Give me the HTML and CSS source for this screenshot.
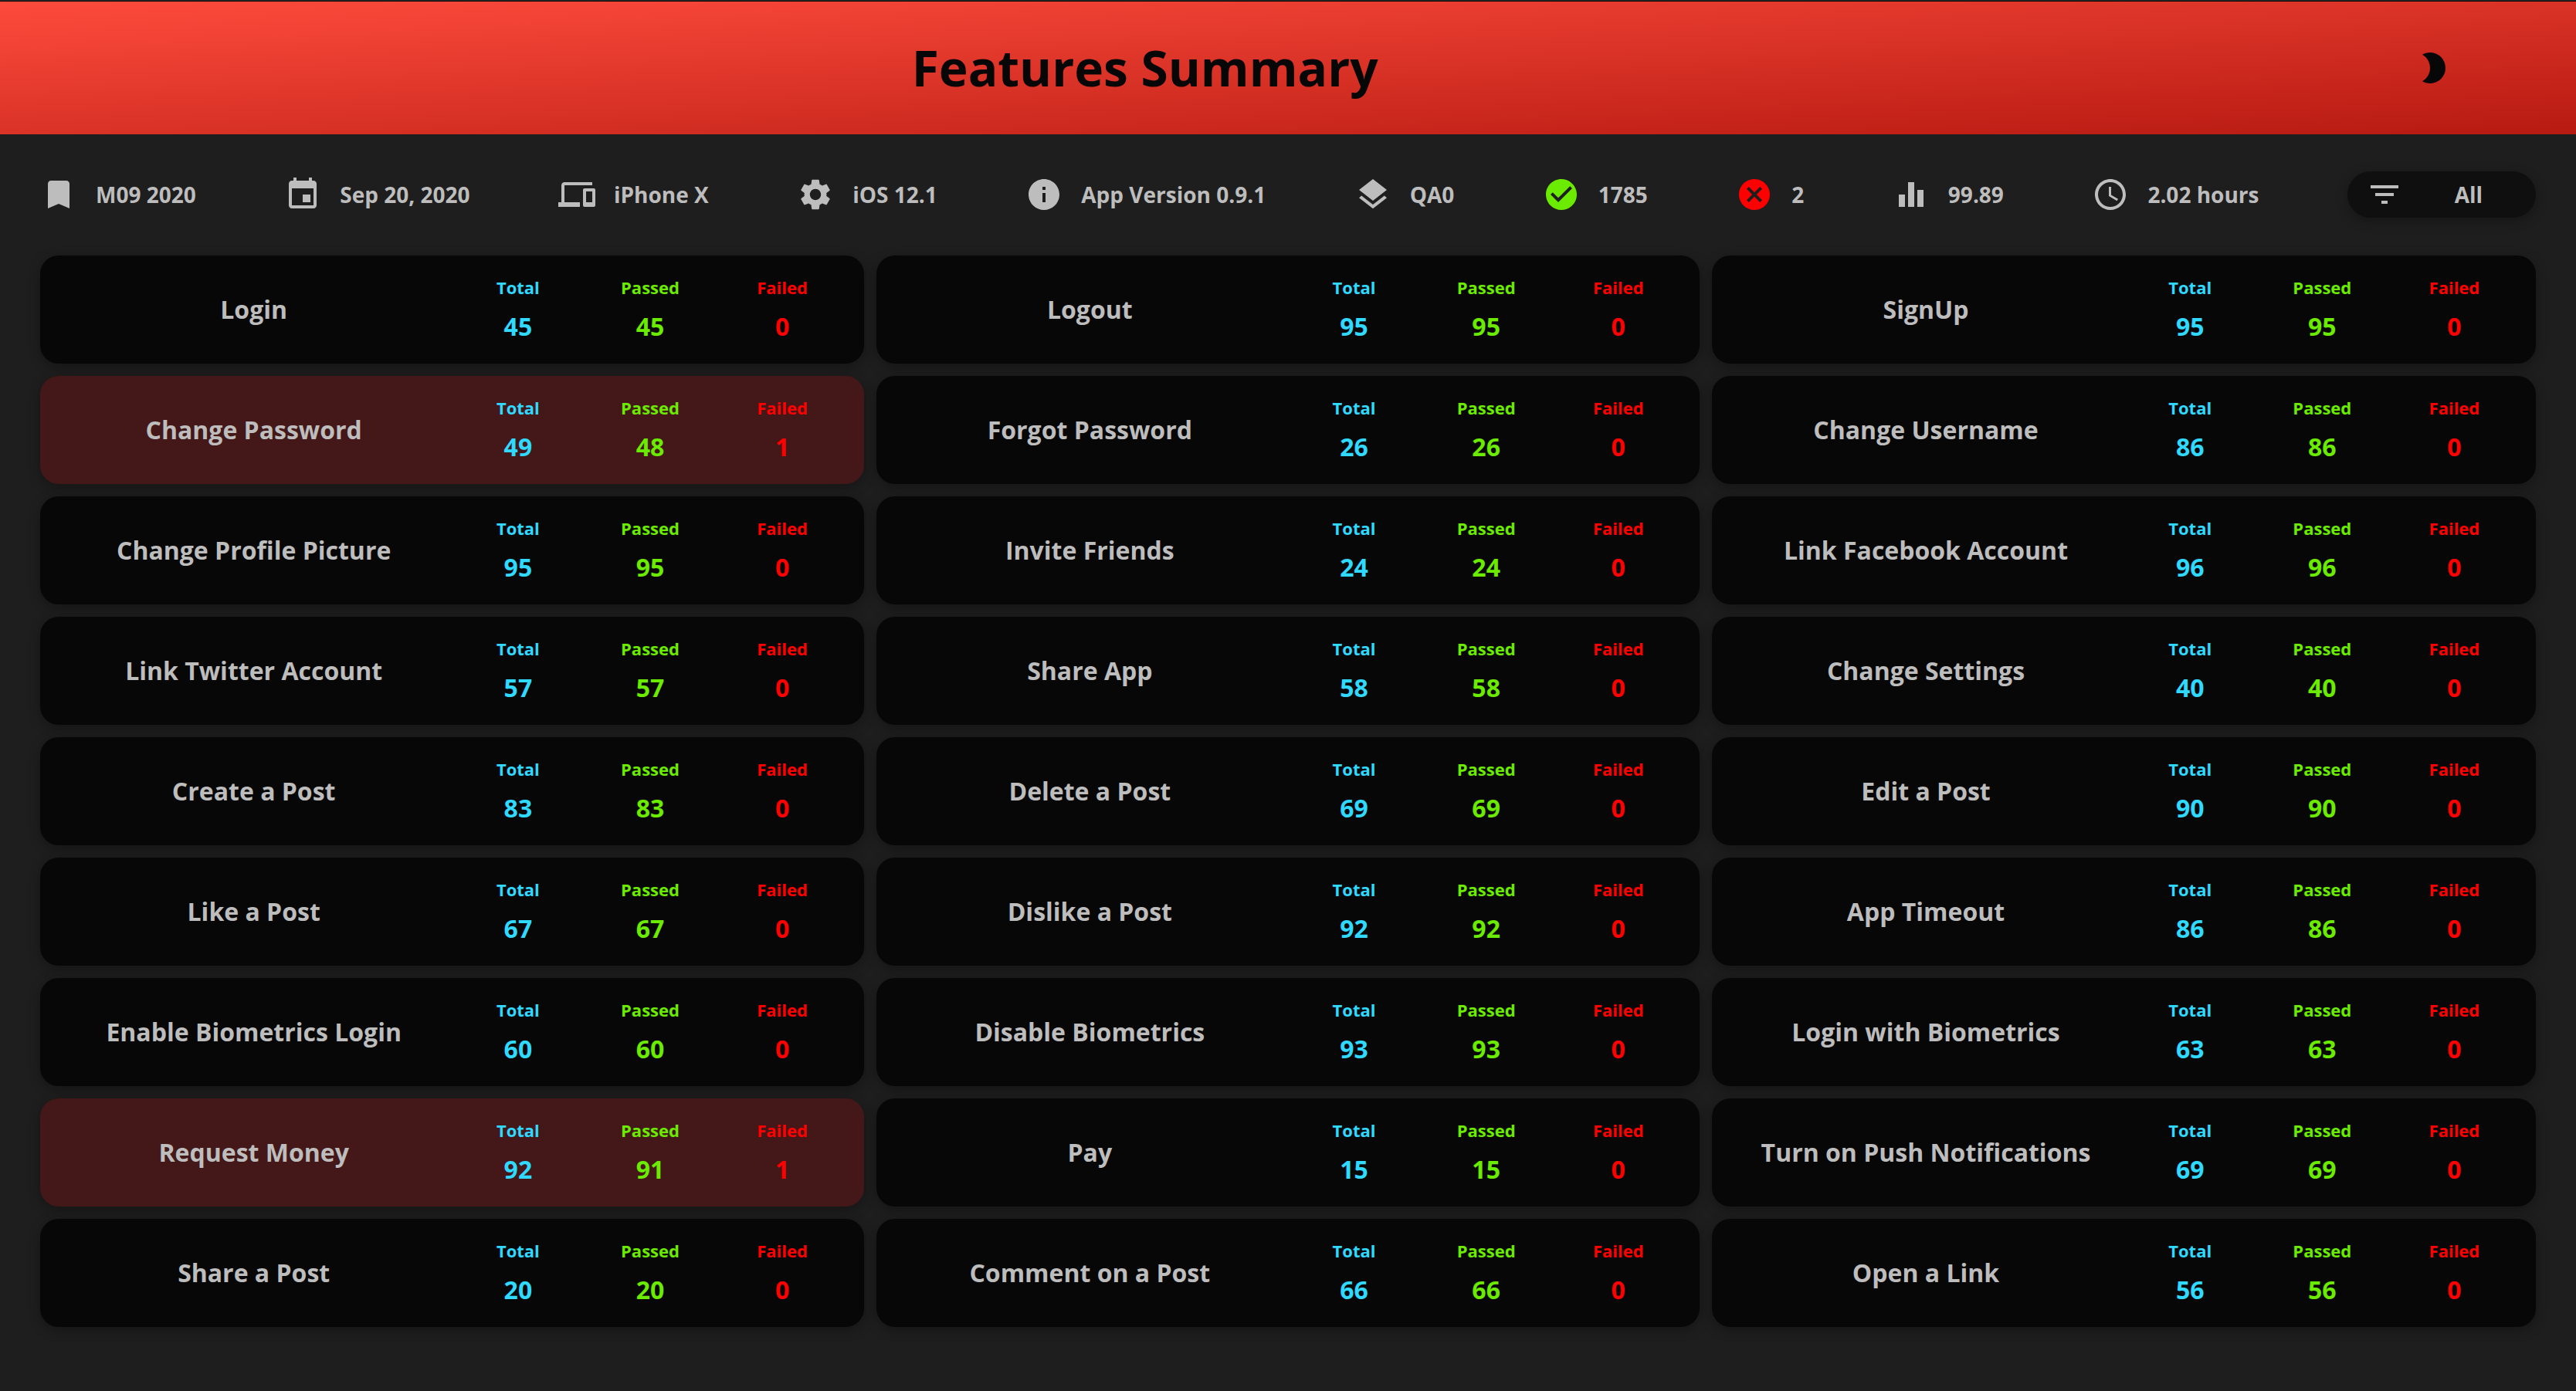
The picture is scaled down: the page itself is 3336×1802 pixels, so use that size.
FILE: index.html
```
<!DOCTYPE html>
<html lang="en">
<head>
<meta charset="utf-8">
<title>Features Summary</title>
<link rel="stylesheet" href="styles.css">
</head>
<body>
<header class="header">
  <h1 class="title">Features Summary</h1>
  <button class="theme-toggle" type="button" aria-label="Toggle theme">
    <svg class="icon" viewBox="0 0 24 24"><path d="M10 2c-1.82 0-3.53.5-5 1.35C7.99 5.08 10 8.3 10 12s-2.01 6.92-5 8.65C6.47 21.5 8.18 22 10 22c5.52 0 10-4.48 10-10S15.52 2 10 2z"/></svg>
  </button>
</header>
<main class="content">
  <ul class="info">
    <li class="info-item"><svg class="icon" viewBox="0 0 24 24"><path d="M17 3H7c-1.1 0-1.99.9-1.99 2L5 21l7-3 7 3V5c0-1.1-.9-2-2-2z"/></svg>M09 2020</li>
    <li class="info-item"><svg class="icon" viewBox="0 0 24 24"><path d="M17 12h-5v5h5v-5zM16 1v2H8V1H6v2H5c-1.11 0-1.99.9-1.99 2L3 19c0 1.1.89 2 2 2h14c1.1 0 2-.9 2-2V5c0-1.1-.9-2-2-2h-1V1h-2zm3 18H5V8h14v11z"/></svg>Sep 20, 2020</li>
    <li class="info-item"><svg class="icon" viewBox="0 0 24 24"><path d="M4 6h18V4H4c-1.1 0-2 .9-2 2v11H0v3h14v-3H4V6zm19 2h-6c-.55 0-1 .45-1 1v10c0 .55.45 1 1 1h6c.55 0 1-.45 1-1V9c0-.55-.45-1-1-1zm-1 9h-4v-7h4v7z"/></svg>iPhone X</li>
    <li class="info-item"><svg class="icon" viewBox="0 0 24 24"><path d="M19.14 12.94c.04-.3.06-.61.06-.94 0-.32-.02-.64-.07-.94l2.03-1.58c.18-.14.23-.41.12-.61l-1.92-3.32c-.12-.22-.37-.29-.59-.22l-2.39.96c-.5-.38-1.03-.7-1.62-.94l-.36-2.54c-.04-.24-.24-.41-.48-.41h-3.84c-.24 0-.43.17-.47.41l-.36 2.54c-.59.24-1.13.57-1.62.94l-2.39-.96c-.22-.08-.47 0-.59.22L2.74 8.87c-.12.21-.08.47.12.61l2.03 1.58c-.05.3-.09.63-.09.94s.02.64.07.94l-2.03 1.58c-.18.14-.23.41-.12.61l1.92 3.32c.12.22.37.29.59.22l2.39-.96c.5.38 1.03.7 1.62.94l.36 2.54c.05.24.24.41.48.41h3.84c.24 0 .44-.17.47-.41l.36-2.54c.59-.24 1.13-.56 1.62-.94l2.39.96c.22.08.47 0 .59-.22l1.92-3.32c.12-.22.07-.47-.12-.61l-2.01-1.58zM12 15.6c-1.98 0-3.6-1.62-3.6-3.6s1.62-3.6 3.6-3.6 3.6 1.62 3.6 3.6-1.62 3.6-3.6 3.6z"/></svg>iOS 12.1</li>
    <li class="info-item"><svg class="icon" viewBox="0 0 24 24"><path d="M12 2C6.48 2 2 6.48 2 12s4.48 10 10 10 10-4.48 10-10S17.52 2 12 2zm1 15h-2v-6h2v6zm0-8h-2V7h2v2z"/></svg>App Version 0.9.1</li>
    <li class="info-item"><svg class="icon" viewBox="0 0 24 24"><path d="M11.99 18.54l-7.37-5.73L3 14.07l9 7 9-7-1.63-1.27-7.38 5.74zM12 16l7.36-5.73L21 9l-9-7-9 7 1.63 1.27L12 16z"/></svg>QA0</li>
    <li class="info-item"><svg class="icon icon-passed" viewBox="0 0 24 24"><path d="M12 2C6.48 2 2 6.48 2 12s4.48 10 10 10 10-4.48 10-10S17.52 2 12 2zm-2 15l-5-5 1.41-1.41L10 14.17l7.59-7.59L19 8l-9 9z"/></svg>1785</li>
    <li class="info-item"><svg class="icon icon-failed" viewBox="0 0 24 24"><path d="M12 2C6.47 2 2 6.47 2 12s4.47 10 10 10 10-4.47 10-10S17.53 2 12 2zm5 13.59L15.59 17 12 13.41 8.41 17 7 15.59 10.59 12 7 8.41 8.41 7 12 10.59 15.59 7 17 8.41 13.41 12 17 15.59z"/></svg>2</li>
    <li class="info-item"><svg class="icon" viewBox="0 0 24 24"><path d="M4 12h4v8H4zM10 4h4v16h-4zM16 9h4v11h-4z"/></svg>99.89</li>
    <li class="info-item"><svg class="icon" viewBox="0 0 24 24"><path d="M11.99 2C6.47 2 2 6.48 2 12s4.47 10 9.99 10C17.52 22 22 17.52 22 12S17.52 2 11.99 2zM12 20c-4.42 0-8-3.58-8-8s3.58-8 8-8 8 3.58 8 8-3.58 8-8 8zm.5-13H11v6l5.25 3.15.75-1.23-4.5-2.67z"/></svg>2.02 hours</li>
    <li class="filter">
      <label class="filter-label" for="filter" aria-label="Filter features"><svg class="icon" viewBox="0 0 24 24"><path d="M10 18h4v-2h-4v2zM3 6v2h18V6H3zm3 7h12v-2H6v2z"/></svg></label>
      <select class="filter-select" id="filter"><option>All</option><option>Passed</option><option>Failed</option></select>
    </li>
  </ul>
  <section class="features" id="features" aria-label="Features"></section>
</main>
<script src="script.js"></script>
</body>
</html>
```
FILE: styles.css
```
* {
  box-sizing: border-box;
}

body {
  margin: 0;
  min-height: 100vh;
  background: #1e1e1e;
  color: #bdbdbd;
  font-family: "Open Sans", "Noto Sans", sans-serif;
  font-weight: 700;
  border-top: 1px solid #2c2c2c;
}

.header {
  display: grid;
  grid-template-columns: 8fr 1fr;
  align-items: center;
  justify-items: center;
  height: 173px;
  border-top: 1px solid #000;
  background: linear-gradient(to bottom right, #fd4b3d, #b71a11);
  color: #070707;
}

.title {
  margin: 0;
  font-size: 64px;
  line-height: 88px;
}

.theme-toggle {
  display: flex;
  padding: 0;
  border: 0;
  background: none;
  color: inherit;
}

.icon {
  display: block;
  flex: none;
  width: 48px;
  height: 48px;
  fill: currentColor;
}

.icon-passed {
  color: #6beb00;
}

.icon-failed {
  color: #f00;
}

.content {
  padding: 48px 52px;
}

.info {
  display: flex;
  justify-content: space-between;
  align-items: center;
  margin: 0 0 49px;
  padding: 0;
  list-style: none;
  font-size: 28px;
  line-height: 38px;
}

.info-item {
  display: flex;
  align-items: center;
  gap: 24px;
}

.filter {
  display: flex;
  align-items: center;
  gap: 24px;
  height: 60px;
  padding: 0 26px 0 24px;
  border-radius: 32px;
  background: #0f0f0f;
  box-shadow: 0 4px 16px rgba(0, 0, 0, 0.3);
}

.filter-select {
  width: 122px;
  padding: 0;
  border: 0;
  appearance: none;
  background: none;
  color: inherit;
  font: inherit;
  text-align: center;
  text-align-last: center;
}

.features {
  display: grid;
  grid-template-columns: repeat(3, 1fr);
  gap: 16px;
}

.card {
  display: grid;
  grid-template-columns: 3fr 1fr 1fr 1fr;
  align-items: center;
  height: 140px;
  padding: 0 20px;
  border-radius: 24px;
  background: #070707;
  box-shadow: 0 4px 16px rgba(0, 0, 0, 0.3);
  text-align: center;
}

.card-failed {
  background: #441818;
}

.name {
  margin: 0;
  font-size: 32px;
  line-height: 44px;
}

.stat {
  display: grid;
  gap: 14px;
}

.label {
  font-size: 22px;
  line-height: 30px;
}

.value {
  font-size: 32px;
  line-height: 44px;
}

.total {
  color: #2fd9ff;
}

.passed {
  color: #6beb00;
}

.failed {
  color: #f00;
}
```
FILE: script.js
```
const features = [
  ["Login", 45, 0], ["Logout", 95, 0], ["SignUp", 95, 0],
  ["Change Password", 49, 1], ["Forgot Password", 26, 0], ["Change Username", 86, 0],
  ["Change Profile Picture", 95, 0], ["Invite Friends", 24, 0], ["Link Facebook Account", 96, 0],
  ["Link Twitter Account", 57, 0], ["Share App", 58, 0], ["Change Settings", 40, 0],
  ["Create a Post", 83, 0], ["Delete a Post", 69, 0], ["Edit a Post", 90, 0],
  ["Like a Post", 67, 0], ["Dislike a Post", 92, 0], ["App Timeout", 86, 0],
  ["Enable Biometrics Login", 60, 0], ["Disable Biometrics", 93, 0], ["Login with Biometrics", 63, 0],
  ["Request Money", 92, 1], ["Pay", 15, 0], ["Turn on Push Notifications", 69, 0],
  ["Share a Post", 20, 0], ["Comment on a Post", 66, 0], ["Open a Link", 56, 0]
];

const stat = (kind, label, value) =>
  `<div class="stat ${kind}"><span class="label">${label}</span><span class="value">${value}</span></div>`;

document.getElementById("features").innerHTML = features.map(([name, total, failed]) =>
  `<article class="card${failed ? " card-failed" : ""}">
    <h2 class="name">${name}</h2>
    ${stat("total", "Total", total)}${stat("passed", "Passed", total - failed)}${stat("failed", "Failed", failed)}
  </article>`).join("");
```
